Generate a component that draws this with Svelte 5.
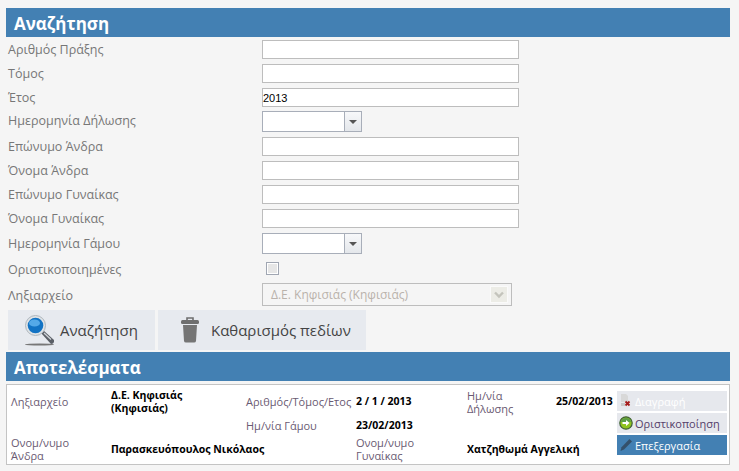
<script>
  const textRows = {
    a: [["Αριθμός Πράξης", ""], ["Τόμος", ""], ["Έτος", "2013"]],
    b: [["Επώνυμο Άνδρα", ""], ["Όνομα Άνδρα", ""], ["Επώνυμο Γυναίκας", ""], ["Όνομα Γυναίκας", ""]]
  };
</script>

{#snippet textRow(label, value)}
  <div class="row">
    <span class="label">{label}</span>
    <input class="text" type="text" {value} />
  </div>
{/snippet}

{#snippet dateRow(label, cls)}
  <div class="row {cls}">
    <span class="label">{label}</span>
    <div class="date">
      <input type="text" />
      <span class="drop"><i></i></span>
    </div>
  </div>
{/snippet}

<div class="page">
  <h2 class="bar">Αναζήτηση</h2>
  <div class="form">
    {#each textRows.a as r}{@render textRow(r[0], r[1])}{/each}
    {@render dateRow("Ημερομηνία Δήλωσης", "d1")}
    {#each textRows.b as r}{@render textRow(r[0], r[1])}{/each}
    {@render dateRow("Ημερομηνία Γάμου", "d2")}
    <div class="row chk">
      <span class="label">Οριστικοποιημένες</span>
      <span class="checkbox"><i></i></span>
    </div>
    <div class="row sel">
      <span class="label">Ληξιαρχείο</span>
      <div class="select">
        <span>Δ.Ε. Κηφισιάς (Κηφισιάς)</span>
        <span class="arrow">
          <svg width="12" height="8" viewBox="0 0 12 8"><path d="M2 1.500 6 5.500 10 1.500" fill="none" stroke="#c4c4bc" stroke-width="2.400"/></svg>
        </span>
      </div>
    </div>
  </div>

  <div class="actions">
    <button class="big search">
      <svg width="30" height="31" viewBox="0 0 30 31">
        <ellipse cx="14.500" cy="29.500" rx="14.500" ry="1.100" fill="#777"/>
        <path d="M16 18l2.500-2.500 10.500 9.500q.5 2-1 3.500l-2 .5z" fill="#5a5f66"/>
        <path d="M19 18l7 6.500" stroke="#cfd3d8" stroke-width="1.300"/>
        <circle cx="10.500" cy="10.500" r="10" fill="#dfe3e6" stroke="#aeb6bd"/>
        <circle cx="10.500" cy="10.500" r="7.800" fill="#1273c4"/>
        <ellipse cx="9.500" cy="8" rx="5.500" ry="3.600" fill="#54a9e8"/>
      </svg>
      <span>Αναζήτηση</span>
    </button>
    <button class="big clear">
      <svg width="20" height="26" viewBox="0 0 20 26">
        <path d="M7 3V1h6v2" fill="none" stroke="#6f6f6f" stroke-width="1.600"/>
        <rect x="1" y="3" width="18" height="4" rx="1.500" fill="#6f6f6f"/>
        <path d="M3 8h14l-1 16q-.2 1.500-2 1.500H6q-1.800 0-2-1.500z" fill="#757575"/>
      </svg>
      <span>Καθαρισμός πεδίων</span>
    </button>
  </div>

  <h2 class="bar second">Αποτελέσματα</h2>

  <div class="result">
    <div class="grid">
      <span class="k">Ληξιαρχείο</span>
      <b class="narrow">Δ.Ε. Κηφισιάς (Κηφισιάς)</b>
      <span class="k one">Αριθμός/Τόμος/Ετος</span>
      <b>2 / 1 / 2013</b>
      <span class="k wrap">Ημ/νία Δήλωσης</span>
      <b class="one">25/02/2013</b>

      <span></span>
      <span></span>
      <span class="k">Ημ/νία Γάμου</span>
      <b>23/02/2013</b>
      <span></span>
      <span></span>

      <span class="k wrap">Ονομ/νυμο Άνδρα</span>
      <b class="span2">Παρασκευόπουλος Νικόλαος</b>
      <span class="k wrap">Ονομ/νυμο Γυναίκας</span>
      <b class="span2">Χατζηθωμά Αγγελική</b>
    </div>
    <div class="side">
      <button class="small del">
        <svg width="14" height="16" viewBox="0 0 14 16">
          <path d="M2 1h5l2 2v6H2z" fill="#d8d8d8"/>
          <path d="M2 10h4v3H2z" fill="#c8c8c8"/>
          <path d="M6.500 8.500l4 4m0-4-4 4" stroke="#a51c1c" stroke-width="1.800"/>
        </svg>
        <span>Διαγραφή</span>
      </button>
      <button class="small fin">
        <svg width="14" height="14" viewBox="0 0 14 14">
          <circle cx="7" cy="7" r="6.200" fill="#8fc31f" stroke="#40603a" stroke-width="1.200"/>
          <path d="M2 6a5 4 0 0 1 10 0z" fill="#5c9d46"/>
          <path d="M3.500 6h3.500V4l3.500 3-3.500 3V8H3.500z" fill="#fff"/>
        </svg>
        <span>Οριστικοποίηση</span>
      </button>
      <button class="small edit">
        <svg width="14" height="14" viewBox="0 0 14 14">
          <path d="M10.500 1 13 3.500 5 11.500 1.500 13l1-3.800z" fill="#34506b"/>
        </svg>
        <span>Επεξεργασία</span>
      </button>
    </div>
  </div>
</div>

<style>
  :global(body) {
    margin: 0;
    background: #f5f5f5;
  }
  .page {
    width: 724px;
    height: 471px;
    margin-left: 6px;
    padding-top: 8px;
    box-sizing: border-box;
    overflow: hidden;
    font-family: "Open Sans", "Noto Sans", sans-serif;
    font-size: 12px;
  }
  .bar {
    margin: 0;
    height: 29px;
    padding-left: 8px;
    overflow: hidden;
    background: #4380b3;
    color: #fff;
    font-size: 17px;
    font-weight: 700;
    line-height: 32px;
  }
  .form {
    padding-top: 3px;
    padding-left: 2px;
  }
  .row {
    display: flex;
    align-items: flex-start;
    height: 24px;
  }
  .row.d1 {
    height: 26px;
    margin-top: -1px;
  }
  .row.d2 {
    height: 26px;
  }
  .row.d2 .label {
    line-height: 21px;
  }
  .row.chk {
    height: 24px;
  }
  .row.sel {
    height: 27px;
  }
  .label {
    width: 254px;
    color: #777;
    font-size: 12.500px;
    line-height: 19px;
  }
  .text {
    box-sizing: border-box;
    width: 257px;
    height: 19px;
    padding: 0;
    border: 1px solid #bdbdbd;
    background: #fff;
    color: #000;
    font-family: "Liberation Sans", sans-serif;
    font-size: 11px;
    outline: none;
  }
  .date {
    display: flex;
    box-sizing: border-box;
    width: 100px;
    height: 21px;
    border: 1px solid #a8aeb9;
    background: #fff;
  }
  .date input {
    flex: 1;
    min-width: 0;
    border: 0;
    padding: 0;
    background: none;
    outline: none;
  }
  .drop {
    display: flex;
    align-items: center;
    justify-content: center;
    width: 16px;
    border-left: 1px solid #a8aeb9;
    background: linear-gradient(#f7f8fa, #e4e7eb);
  }
  .drop i {
    border-top: 4px solid #555;
    border-left: 4px solid transparent;
    border-right: 4px solid transparent;
  }
  .chk .label {
    line-height: 22px;
  }
  .checkbox {
    box-sizing: border-box;
    width: 13px;
    height: 13px;
    margin: 3px 0 0 4px;
    border: 1px solid #a0a6b2;
    padding: 1px;
    background: #fff;
  }
  .checkbox i {
    display: block;
    height: 100%;
    background: #e6e6e6;
  }
  .sel .label {
    line-height: 25px;
  }
  .select {
    display: flex;
    align-items: center;
    justify-content: space-between;
    box-sizing: border-box;
    width: 250px;
    height: 23px;
    padding: 0 3px 0 8px;
    border: 1px solid #bdbdbd;
    color: #b9b2ab;
    font-size: 12px;
  }
  .arrow {
    display: flex;
    align-items: center;
    justify-content: center;
    width: 16px;
    height: 15px;
    background: #ecece6;
    border: 1px solid #fafafa;
  }
  .actions {
    display: flex;
    gap: 3px;
    padding-left: 2px;
  }
  button {
    border: 0;
    font-family: inherit;
    cursor: pointer;
  }
  .big {
    display: flex;
    align-items: center;
    height: 40px;
    background: #e7eaef;
    color: #444;
    font-size: 15px;
  }
  .search {
    width: 147px;
    padding: 0 0 0 17px;
    gap: 5px;
  }
  .clear {
    width: 208px;
    padding: 0 0 0 22px;
    gap: 11px;
  }
  .second {
    margin-top: 2px;
  }
  .result {
    display: flex;
    box-sizing: border-box;
    height: 81px;
    margin-top: 3px;
    border: 1px solid #c4c4c4;
    background: #fff;
    color: #000;
  }
  .grid {
    display: grid;
    grid-template-columns: 100px 135px 110px 111px 89px 61px;
    grid-template-rows: 25px 23px 24px;
    width: 610px;
    padding: 4px 0 0 4px;
    box-sizing: border-box;
    font-size: 10.500px;
    line-height: 13px;
  }
  .grid > * {
    align-self: center;
  }
  .k {
    color: #6a5a72;
    font-size: 11px;
  }
  .wrap {
    max-width: 70px;
  }
  .grid b {
    font-weight: 700;
  }
  .narrow {
    max-width: 100px;
  }
  .one {
    white-space: nowrap;
  }
  .span2 {
    grid-column: span 2;
  }
  .side {
    display: flex;
    flex-direction: column;
    gap: 2px;
    width: 110px;
    padding-top: 6px;
  }
  .small {
    display: flex;
    align-items: center;
    gap: 2px;
    height: 20px;
    padding: 0 0 0 2px;
    background: #e6e8ed;
    color: #55406a;
    font-size: 11px;
    text-align: left;
  }
  .del {
    color: #fff;
  }
  .edit {
    background: #4380b3;
    color: #fff;
  }
</style>
